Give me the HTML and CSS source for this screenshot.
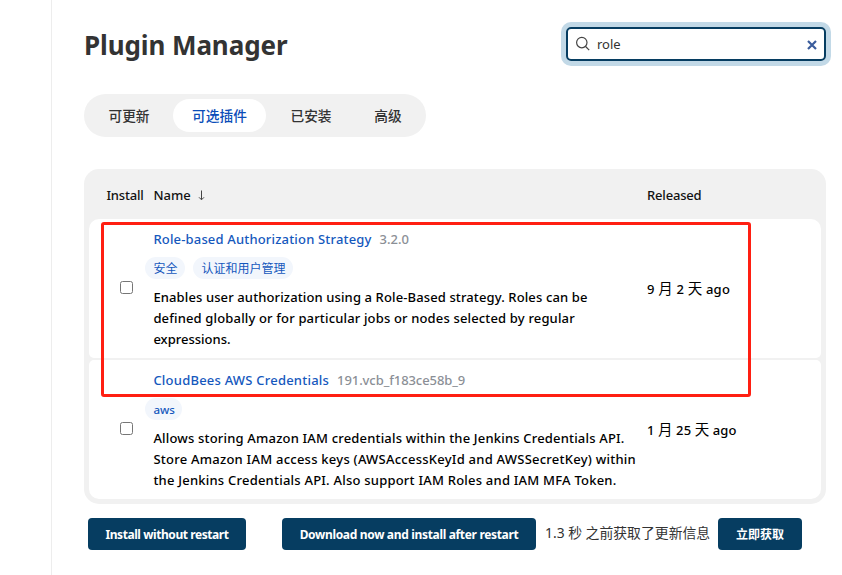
FILE: index.html
```html
<!DOCTYPE html>
<html lang="zh-CN">
<head>
<meta charset="utf-8">
<title>Plugin Manager</title>
<link rel="stylesheet" href="styles.css">
</head>
<body>
<div class="page">
  <aside class="side"></aside>
  <main class="main">
    <header class="header">
      <h1 class="title">Plugin Manager</h1>
      <div class="search">
        <svg class="search-icon" viewBox="0 0 16 16" width="16" height="16"><circle cx="6.8" cy="6.6" r="5.2"/><path d="M10.6 10.5l3.6 3.6"/></svg>
        <span class="query">role</span>
        <svg class="clear" viewBox="0 0 10 10" width="10" height="10"><path d="M1 1l8 8M9 1l-8 8"/></svg>
      </div>
    </header>
    <nav class="tabs">
      <a class="tab t1">可更新</a>
      <a class="tab t2 active">可选插件</a>
      <a class="tab t3">已安装</a>
      <a class="tab t4">高级</a>
    </nav>
    <section class="table">
      <div class="row head">
        <span class="c-install"><span class="h-install">Install</span></span>
        <span class="c-name"><span class="h-name">Name</span><svg class="arrow" viewBox="0 0 7 11" width="7" height="11"><path d="M3.5 0.5v9M1 7.3l2.5 2.5L6 7.3"/></svg></span>
        <span class="c-date"><span class="h-rel">Released</span></span>
      </div>
      <div class="row item">
        <div class="c-install"><input type="checkbox" class="check"></div>
        <div class="c-name">
          <div class="name"><a class="link l1">Role-based Authorization Strategy</a><span class="version v1">3.2.0</span></div>
          <div class="tags"><span class="tag g1">安全</span><span class="tag g2">认证和用户管理</span></div>
          <div class="desc"><span class="d1">Enables user authorization using a Role-Based strategy. Roles can be</span><br><span class="d2">defined globally or for particular jobs or nodes selected by regular</span><br><span class="d3">expressions.</span></div>
        </div>
        <div class="c-date"><span class="r1">9 <span class="unit">月</span> 2 <span class="unit">天</span> ago</span></div>
      </div>
      <div class="row item">
        <div class="c-install"><input type="checkbox" class="check"></div>
        <div class="c-name">
          <div class="name"><a class="link l2">CloudBees AWS Credentials</a><span class="version v2">191.vcb_f183ce58b_9</span></div>
          <div class="tags"><span class="tag g3">aws</span></div>
          <div class="desc"><span class="d4">Allows storing Amazon IAM credentials within the Jenkins Credentials API.</span><br><span class="d5">Store Amazon IAM access keys (AWSAccessKeyId and AWSSecretKey) within</span><br><span class="d6">the Jenkins Credentials API. Also support IAM Roles and IAM MFA Token.</span></div>
        </div>
        <div class="c-date"><span class="r2">1 <span class="unit">月</span> 25 <span class="unit">天</span> ago</span></div>
      </div>
      <div class="highlight"></div>
    </section>
    <footer class="actions">
      <button class="btn b1"><span>Install without restart</span></button>
      <button class="btn b2"><span>Download now and install after restart</span></button>
      <span class="info">1.3 秒 之前获取了更新信息</span>
      <button class="btn b3"><span>立即获取</span></button>
    </footer>
  </main>
</div>
</body>
</html>
```
FILE: styles.css
```css
* { box-sizing: border-box; }
body { margin: 0; background: #fff; color: #000; font: 500 13px/21px "Noto Sans", "Noto Sans CJK SC", sans-serif; overflow: hidden; }
.page { display: flex; width: 842px; height: 575px; }
.side { width: 52px; border-right: 1px solid #ededed; }
.main { width: 774px; padding: 22px 0 0 32px; }
.header { display: flex; justify-content: space-between; width: 742px; height: 72px; }
.title { margin: 5px 0 0; font-size: 26px; line-height: 36px; font-weight: 700; color: #333; white-space: nowrap; height: 36px; letter-spacing: -0.1px; }
.search { display: flex; align-items: center; width: 260px; height: 34px; margin-top: 5px; padding: 0 7px 0 7px; border: 2px solid #063d61; border-radius: 5px; box-shadow: 0 0 0 5px #c2d9e7; }
.search-icon { fill: none; stroke: #444; stroke-width: 1.2; }
.query { flex: 1; margin-left: 6px; font-weight: 400; color: #333; }
.clear { margin-top: 2px; fill: none; stroke: #3a5c9c; stroke-width: 2.2; }
.tabs { display: flex; align-items: center; width: 342px; height: 43px; padding: 0 5px; border-radius: 22px; background: #f1f1f1; }
.tab { display: flex; justify-content: center; align-items: center; height: 33px; border-radius: 17px; font-size: 13.7px; color: #333; white-space: nowrap; }
.t1 { width: 80px; }
.t2 { width: 93px; margin-left: 4px; }
.t3 { width: 90px; }
.t4 { width: 64px; }
.tab.active { background: #fff; color: #0b4db8; }
.table { position: relative; width: 742px; height: 335px; margin-top: 32px; padding: 0 5px 5px; border-radius: 15px; background: #f1f1f1; }
.row { display: flex; width: 732px; white-space: nowrap; }
.head { height: 50px; padding-top: 16px; color: #111; }
.h-install { letter-spacing: -0.18px; }
.h-rel { letter-spacing: -0.18px; }
.c-install { width: 64.4px; padding-left: 17.4px; }
.c-name { width: 493.6px; }
.arrow { margin-left: 7px; fill: none; stroke: #444; stroke-width: 1; vertical-align: -1px; }
.item { height: 139px; background: #fff; border-radius: 10px 10px 5px 5px; }
.item + .item { margin-top: 2px; border-radius: 5px 5px 10px 10px; }
.item .c-name { padding-top: 10px; }
.check { display: block; width: 13px; height: 13px; margin: 62px 0 0 13.6px; }
.item .c-date { padding-top: 60px; }
.unit { font-size: 14.5px; font-weight: 400; line-height: 1; }
.r1 { letter-spacing: 0.2px; }
.r2 { letter-spacing: 0.1px; }
.name { height: 28px; }
.link { color: #1558bd; }
.l1 { letter-spacing: 0.17px; }
.l2 { letter-spacing: 0.22px; }
.d1 { letter-spacing: 0.12px; }
.d2 { letter-spacing: 0.155px; }
.d4 { letter-spacing: 0.18px; }
.d5 { letter-spacing: 0.24px; }
.d6 { letter-spacing: 0.22px; }
.version { margin-left: 8px; color: #8b8f96; }
.v2 { letter-spacing: -0.08px; }
.tags { display: flex; gap: 8px; margin-left: -8px; height: 30px; }
.tag { height: 22px; padding: 0 8px; border-radius: 11px; background: #f2f6fc; color: #1558bd; font-size: 12px; line-height: 23px; font-weight: 400; }
.g1 { width: 40px; }
.g2 { width: 100px; }
.g3 { width: 37px; font-size: 11.5px; font-weight: 500; }
.highlight { position: absolute; left: 17px; top: 53px; width: 650px; height: 175px; border: 3px solid #ff1f12; border-radius: 3px; }
.actions { display: flex; align-items: center; width: 742px; margin-top: 14px; padding-left: 4px; }
.btn { height: 32px; padding: 1px 0 0; border: 0; border-radius: 4px; background: #063d61; color: #fff; font: 700 12px/20px "Noto Sans", "Noto Sans CJK SC", sans-serif; white-space: nowrap; }
.b1 { width: 158px; letter-spacing: -0.43px; }
.b2 { width: 254px; margin-left: 36px; letter-spacing: -0.33px; }
.info { width: 173px; margin: -4px 0 0 9px; font-size: 13.85px; font-weight: 400; color: #333; white-space: nowrap; }
.b3 { width: 84px; }
```
